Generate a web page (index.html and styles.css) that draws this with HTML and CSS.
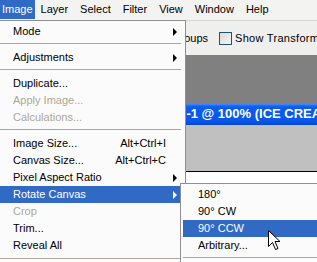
FILE: index.html
```html
<!DOCTYPE html>
<html>
<head>
<meta charset="utf-8">
<link rel="stylesheet" href="styles.css">
</head>
<body>
<div class="app">
  <div class="menubar">
    <span class="mb-item first active">Image</span>
    <span class="mb-item">Layer</span>
    <span class="mb-item">Select</span>
    <span class="mb-item">Filter</span>
    <span class="mb-item">View</span>
    <span class="mb-item">Window</span>
    <span class="mb-item">Help</span>
  </div>
  <div class="options">
    <span class="opt-label">Auto Select Groups</span>
    <span class="checkbox"></span>
    <span class="opt-text">Show Transform Controls</span>
  </div>
  <div class="workspace">
    <div class="docwin">
      <div class="titlebar">Untitled-1 @ 100% (ICE CREAM, RGB/8)</div>
      <div class="doc-area"><div class="canvas"></div></div>
    </div>
  </div>

  <div class="menu dropdown">
    <div class="mi sub">Mode</div>
    <div class="sep"></div>
    <div class="mi sub">Adjustments</div>
    <div class="sep"></div>
    <div class="mi">Duplicate...</div>
    <div class="mi disabled">Apply Image...</div>
    <div class="mi disabled">Calculations...</div>
    <div class="sep"></div>
    <div class="mi">Image Size...<span class="key">Alt+Ctrl+I</span></div>
    <div class="mi">Canvas Size...<span class="key">Alt+Ctrl+C</span></div>
    <div class="mi sub">Pixel Aspect Ratio</div>
    <div class="mi sub hl">Rotate Canvas</div>
    <div class="mi disabled">Crop</div>
    <div class="mi">Trim...</div>
    <div class="mi">Reveal All</div>
    <div class="sep sep-low"></div>
  </div>

  <div class="menu submenu">
    <div class="mi">180°</div>
    <div class="mi">90° CW</div>
    <div class="mi hl">90° CCW</div>
    <div class="mi">Arbitrary...</div>
    <div class="sep"></div>
  </div>

  <svg class="cursor" width="13" height="21" viewBox="0 0 13 21">
    <path d="M0.5 0.5 L0.5 16.5 L4.5 12.5 L7.5 19.5 L10 18.5 L7 11.5 L12 11.5 Z" fill="#fff" stroke="#000" stroke-width="1" stroke-linejoin="miter"/>
  </svg>
</div>
</body>
</html>
```

FILE: styles.css
```css
html, body {
  margin: 0;
  padding: 0;
}
body {
  width: 317px;
  height: 262px;
  overflow: hidden;
  font-family: "Liberation Sans", Tahoma, sans-serif;
  font-size: 11px;
  color: #000;
  background: #808080;
}
.app {
  position: relative;
  width: 317px;
  height: 262px;
  overflow: hidden;
  display: flex;
  flex-direction: column;
}
.menubar {
  height: 20px;
  flex: none;
  display: flex;
  align-items: flex-start;
  background: #f3f3f1;
}
.mb-item {
  padding: 0 6px;
  height: 19px;
  line-height: 19px;
}
.mb-item.first {
  padding: 0 2px;
}
.mb-item.active {
  background: #316ac5;
  color: #fff;
}
.options {
  height: 34px;
  flex: none;
  border-top: 1px solid #d6d6d2;
  background: #efefed;
  display: flex;
  align-items: center;
  overflow: hidden;
}
.opt-label {
  flex: none;
  width: 208px;
  text-align: right;
  white-space: nowrap;
}
.checkbox {
  width: 11px;
  height: 11px;
  margin-left: 11px;
  border: 1px solid #1c5180;
  background: linear-gradient(135deg, #dcdcd6, #f4f4f2);
  flex: none;
}
.opt-text {
  flex: none;
  margin-left: 3px;
  white-space: nowrap;
  font-size: 11px;
  letter-spacing: 0.3px;
}
.workspace {
  flex: 1;
  background: #808080;
  padding-top: 49px;
}
.titlebar {
  height: 21px;
  line-height: 20px;
  padding-left: 138px;
  white-space: nowrap;
  color: #fff;
  font-weight: bold;
  font-size: 13px;
  background: linear-gradient(to bottom, #4a94ff 0, #2a72f5 1px, #0c5cf0 3px, #0857e8 17px, #0448d2 21px);
}
.doc-area {
  height: 200px;
  background: #c0c0c0;
  padding-top: 46px;
}
.canvas {
  height: 200px;
  background: #fff;
  border-top: 1px solid #000;
}
.menu {
  position: absolute;
  background: #fbfbfb;
  border: 1px solid #8f8f8f;
  padding: 2px;
  box-sizing: border-box;
}
.dropdown {
  left: -3px;
  top: 20px;
  width: 189px;
  padding-bottom: 20px;
}
.submenu {
  left: 180px;
  top: 183px;
  width: 160px;
  padding-bottom: 20px;
}
.mi {
  position: relative;
  height: 17px;
  line-height: 17px;
  padding-left: 13px;
  display: flex;
  white-space: nowrap;
}
.submenu .mi {
  padding-left: 15px;
}
.mi.disabled {
  color: #aca899;
}
.mi.hl {
  background: #316ac5;
  color: #fff;
}
.key {
  margin-left: auto;
  padding-right: 17px;
}
.mi.sub::after {
  content: "";
  position: absolute;
  right: 6px;
  top: 5px;
  border-left: 4px solid currentColor;
  border-top: 4px solid transparent;
  border-bottom: 4px solid transparent;
}
.sep {
  height: 9px;
  position: relative;
}
.sep::before {
  content: "";
  position: absolute;
  left: 0;
  right: 2px;
  top: 3px;
  height: 1px;
  background: #aca899;
}
.sep-low::before {
  top: 4px;
}
.cursor {
  position: absolute;
  left: 268px;
  top: 230px;
}
```
